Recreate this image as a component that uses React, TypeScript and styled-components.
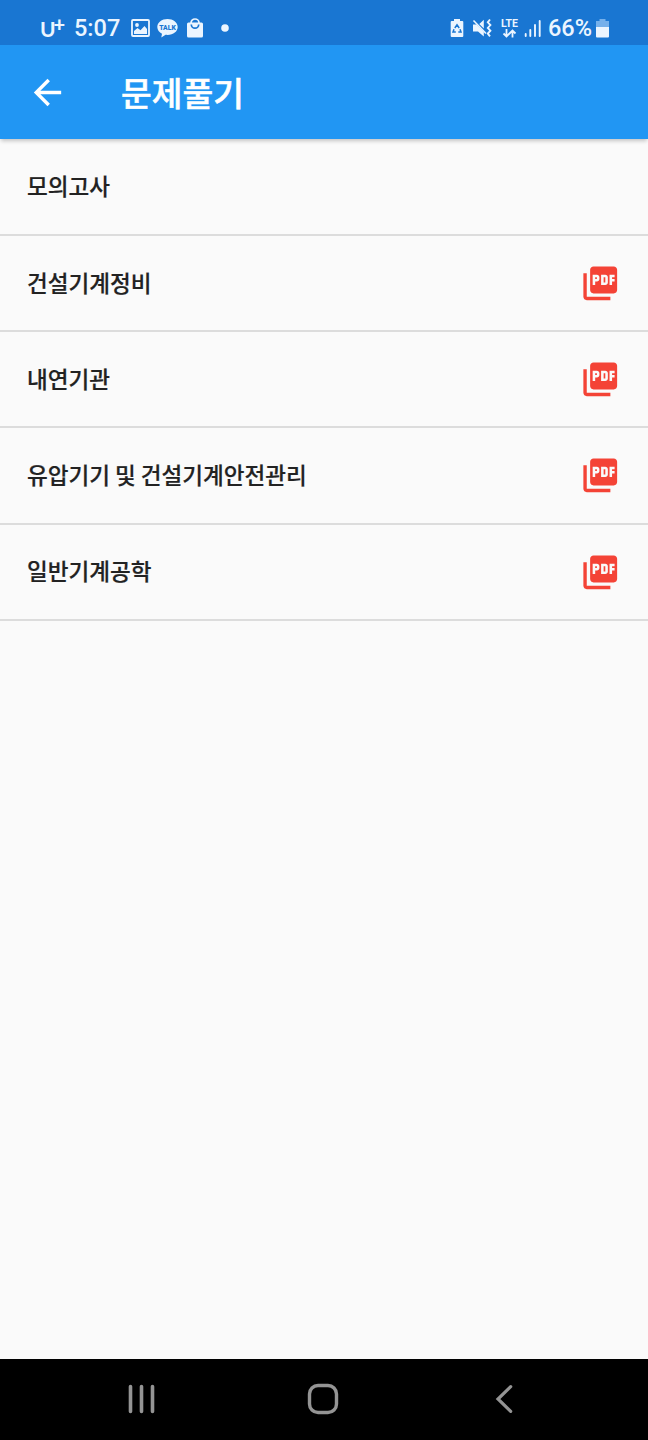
import React from "react";
import styled, { createGlobalStyle } from "styled-components";
import { MdArrowBack, MdPictureAsPdf } from "react-icons/md";

const GlobalStyle = createGlobalStyle`
  * { box-sizing: border-box; }
  body { margin: 0; background: #fafafa; }
`;

const Screen = styled.div`
  display: flex;
  flex-direction: column;
  width: 648px;
  height: 1440px;
  overflow: hidden;
  background: #fafafa;
  font-family: Roboto, "Noto Sans CJK KR", sans-serif;
`;

const StatusBar = styled.div`
  display: flex;
  justify-content: space-between;
  height: 45px;
  padding: 10px 39px 0 40px;
  background: #1976d2;
  color: #ebf5ff;
  flex: none;
`;

const StatusGroup = styled.div`
  display: flex;
  align-items: center;
  height: 36px;
`;

const StatusText = styled.span<{ $left?: number }>`
  margin-left: ${(p) => p.$left ?? 0}px;
  font-size: 23.5px;
  font-weight: 500;
  line-height: 38px;
  white-space: nowrap;
`;

const Carrier = styled.span`
  display: flex;
  width: 26px;
  height: 36px;
  font-family: Lato, sans-serif;
  font-weight: 700;
  font-size: 21px;
  line-height: 38px;
`;

const Plus = styled.span`
  font-size: 20px;
  font-weight: 900;
  line-height: 28px;
  margin-left: -2px;
`;

const StatusIcon = styled.svg<{ $left: number }>`
  flex: none;
  margin-left: ${(p) => p.$left}px;
`;

const Lte = styled.span`
  display: flex;
  flex-direction: column;
  align-items: center;
  width: 19px;
  margin-left: 7px;
  font: 700 10.5px/10px Roboto, sans-serif;
`;

const AppBar = styled.header`
  display: flex;
  align-items: center;
  flex: none;
  height: 94px;
  padding-left: 27px;
  background: #2196f3;
  color: #fff;
  box-shadow: 0 3px 4px -1px rgba(0, 0, 0, 0.22);
`;

const Title = styled.h1`
  margin: 0 0 0 53px;
  font-family: "Noto Sans CJK KR", sans-serif;
  font-size: 33.4px;
  font-weight: 500;
  line-height: 48px;
  -webkit-text-stroke: 0.5px currentColor;
`;

const List = styled.ul`
  flex: 1;
  margin: 0;
  padding: 0.7px 0 0;
  list-style: none;
`;

const Row = styled.li`
  display: flex;
  align-items: center;
  justify-content: space-between;
  height: 96.25px;
  padding: 0 27.5px 0 27px;
  border-bottom: 2px solid #dcdcdc;
`;

const RowLabel = styled.span`
  padding-bottom: 3px;
  color: #222;
  font-family: "Noto Sans CJK KR", sans-serif;
  font-size: 22.55px;
  font-weight: 500;
  line-height: 34px;
  -webkit-text-stroke: 0.2px currentColor;
`;

const NavBar = styled.nav`
  display: flex;
  align-items: center;
  flex: none;
  height: 81px;
  padding: 0 0 2px 127px;
  background: #000;
  color: #949494;
`;

const NavIcon = styled.svg<{ $left?: number }>`
  margin-left: ${(p) => p.$left ?? 0}px;
  flex: none;
`;

const items = [
  { label: "모의고사", pdf: false },
  { label: "건설기계정비", pdf: true },
  { label: "내연기관", pdf: true },
  { label: "유압기기 및 건설기계안전관리", pdf: true },
  { label: "일반기계공학", pdf: true },
];

const PictureIcon = () => (
  <StatusIcon $left={11} width="19" height="18" viewBox="0 0 19 18">
    <rect x="1" y="1" width="17" height="16" rx="1" fill="none" stroke="currentColor" strokeWidth="1.8" />
    <circle cx="6" cy="6" r="1.9" fill="currentColor" />
    <path d="M3 15v-3l3.500-3 3 2.300L13.500 7 16 10v5z" fill="currentColor" />
  </StatusIcon>
);

const TalkIcon = () => (
  <StatusIcon $left={7} width="21" height="20" viewBox="0 0 21 20">
    <path d="M10.500 1C4.900 1 .3 4.500.3 9c0 2.900 1.900 5.400 4.700 6.800L4.300 19.500l4.300-2.700c7 .8 12.100-3 12.100-7.800 0-4.500-4.600-8-10.200-8z" fill="currentColor" />
    <text x="10.500" y="11.600" textAnchor="middle" fontSize="6.800" fontWeight="900" fontFamily="Roboto, sans-serif" fill="#1976d2">TALK</text>
  </StatusIcon>
);

const BagIcon = () => (
  <StatusIcon $left={8} width="18" height="20" viewBox="0 0 18 20">
    <path d="M5 6V5a4 4 0 0 1 8 0v1" fill="none" stroke="currentColor" strokeWidth="1.7" />
    <rect x="1" y="4.500" width="16" height="15" rx="1.500" fill="currentColor" />
    <path d="M5.300 6.500a3.700 3.700 0 0 0 7.400 0" fill="none" stroke="#1976d2" strokeWidth="1.700" />
  </StatusIcon>
);

const DotIcon = () => (
  <StatusIcon $left={17} width="8" height="8" viewBox="0 0 8 8">
    <circle cx="4" cy="4" r="3.800" fill="currentColor" />
  </StatusIcon>
);

const BatterySaverIcon = () => (
  <StatusIcon $left={0} width="14" height="20" viewBox="0 0 14 20">
    <path d="M4 1h6v2h2.300q1 0 1 1v14q0 1-1 1H1.700q-1 0-1-1V4q0-1 1-1H4z" fill="currentColor" />
    <path d="M4.800 10 7 6.800 9.200 10M10 11.200l1 2.800H8.300M5.800 14H3L4 11.200" fill="none" stroke="#1976d2" strokeWidth="1.500" />
  </StatusIcon>
);

const VibrateMuteIcon = () => (
  <StatusIcon $left={8} width="21" height="20" viewBox="0 0 21 20">
    <path d="M1 6.500h3.500L11.800 13.800V18.500L6 13.500H1zM7.300 6l4.500-4.300v8.800z" fill="currentColor" />
    <path d="M1.500 2.500 14 15.500" stroke="currentColor" strokeWidth="1.600" />
    <path d="m18 1.500-2.200 2.800 2.600 2.800-2.600 2.800 2.600 2.800-2.600 2.800 2.200 2.800" fill="none" stroke="currentColor" strokeWidth="1.900" />
  </StatusIcon>
);

const DataArrows = () => (
  <svg width="15" height="9" viewBox="0 0 15 9">
    <path d="M4.500 0v7M1.500 4.500l3 3 3-3M10.500 8.500V1.500M7.500 4.500l3-3 3 3" fill="none" stroke="currentColor" strokeWidth="1.800" />
  </svg>
);

const SignalIcon = () => (
  <StatusIcon $left={5} width="18" height="18" viewBox="0 0 18 18">
    <path d="M1.700 15v2M6.300 11v6M11 6v11M15.700 2v15" stroke="currentColor" strokeWidth="1.900" strokeLinecap="round" />
  </StatusIcon>
);

const BatteryIcon = () => (
  <StatusIcon $left={4} width="13" height="19" viewBox="0 0 13 19">
    <path d="M3.500 0h6v2H13v6H0V2h3.500z" fill="#75b0eb" />
    <path d="M0 8h13v9.500q0 1-1 1H1q-1 0-1-1z" fill="currentColor" />
  </StatusIcon>
);

export default function App() {
  return (
    <Screen>
      <GlobalStyle />
      <StatusBar>
        <StatusGroup>
          <Carrier>U<Plus>+</Plus></Carrier>
          <StatusText $left={8}>5:07</StatusText>
          <PictureIcon />
          <TalkIcon />
          <BagIcon />
          <DotIcon />
        </StatusGroup>
        <StatusGroup>
          <BatterySaverIcon />
          <VibrateMuteIcon />
          <Lte>LTE<DataArrows /></Lte>
          <SignalIcon />
          <StatusText $left={6}>66%</StatusText>
          <BatteryIcon />
        </StatusGroup>
      </StatusBar>
      <AppBar>
        <MdArrowBack size={41} />
        <Title>문제풀기</Title>
      </AppBar>
      <List>
        {items.map((item) => (
          <Row key={item.label}>
            <RowLabel>{item.label}</RowLabel>
            {item.pdf && <MdPictureAsPdf size={40.5} color="#f44336" />}
          </Row>
        ))}
      </List>
      <NavBar>
        <NavIcon width="30" height="30" viewBox="0 0 30 30">
          <path d="M3.500 2.500v25M14.500 2.500v25M25.500 2.500v25" stroke="currentColor" strokeWidth="3.600" strokeLinecap="round" />
        </NavIcon>
        <NavIcon $left={150} width="32" height="32" viewBox="0 0 32 32">
          <rect x="2.500" y="2.500" width="27" height="27" rx="8.500" fill="none" stroke="currentColor" strokeWidth="3.400" />
        </NavIcon>
        <NavIcon $left={156} width="20" height="30" viewBox="0 0 20 30">
          <path d="M15.700 2.700 3 15l12.700 12.300" fill="none" stroke="currentColor" strokeWidth="3.200" strokeLinecap="round" />
        </NavIcon>
      </NavBar>
    </Screen>
  );
}
